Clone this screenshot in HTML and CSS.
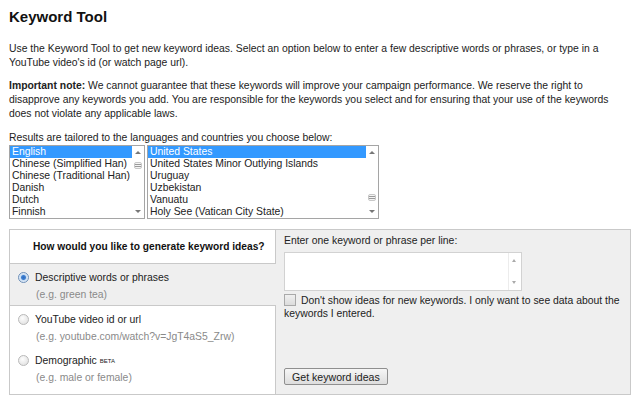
FILE: index.html
```html
<!DOCTYPE html>
<html lang="en">
<head>
    <meta charset="UTF-8">
    <title>Keyword Tool</title>
    <link rel="stylesheet" href="styles.css">
</head>
<body>

<h1 class="page-title">Keyword Tool</h1>

<p class="intro">Use the Keyword Tool to get new keyword ideas. Select an option below to enter a few descriptive words or phrases, or type in a YouTube video's id (or watch page url).</p>

<p class="intro"><b>Important note:</b> We cannot guarantee that these keywords will improve your campaign performance. We reserve the right to disapprove any keywords you add. You are responsible for the keywords you select and for ensuring that your use of the keywords does not violate any applicable laws.</p>

<div class="tailor-label">Results are tailored to the languages and countries you choose below:</div>

<div class="lists">
    <div class="listbox lang-list">
        <div class="list-items">
            <div class="item selected">English</div>
            <div class="item">Chinese (Simplified Han)</div>
            <div class="item">Chinese (Traditional Han)</div>
            <div class="item">Danish</div>
            <div class="item">Dutch</div>
            <div class="item">Finnish</div>
        </div>
        <div class="scroll">
            <span class="arrow up"></span>
            <span class="grip grip-top"></span>
            <span class="arrow down"></span>
        </div>
    </div>
    <div class="listbox country-list">
        <div class="list-items">
            <div class="item selected">United States</div>
            <div class="item">United States Minor Outlying Islands</div>
            <div class="item">Uruguay</div>
            <div class="item">Uzbekistan</div>
            <div class="item">Vanuatu</div>
            <div class="item">Holy See (Vatican City State)</div>
        </div>
        <div class="scroll">
            <span class="arrow up"></span>
            <span class="grip grip-low"></span>
            <span class="arrow down"></span>
        </div>
    </div>
</div>

<div class="panel">
    <div class="choices">
        <div class="choices-head">How would you like to generate keyword ideas?</div>
        <div class="option active">
            <div class="option-label"><span class="radio checked"></span>Descriptive words or phrases</div>
            <div class="option-hint">(e.g. green tea)</div>
        </div>
        <div class="other-options">
            <div class="option">
                <div class="option-label"><span class="radio"></span>YouTube video id or url</div>
                <div class="option-hint">(e.g. youtube.com/watch?v=JgT4aS5_Zrw)</div>
            </div>
            <div class="option">
                <div class="option-label"><span class="radio"></span>Demographic <sup class="beta">BETA</sup></div>
                <div class="option-hint">(e.g. male or female)</div>
            </div>
        </div>
    </div>
    <div class="entry">
        <div class="entry-label">Enter one keyword or phrase per line:</div>
        <div class="textbox">
            <div class="textbox-scroll">
                <span class="arrow up"></span>
                <span class="arrow down"></span>
            </div>
        </div>
        <div class="only-data">
            <span class="checkbox"></span>Don't show ideas for new keywords. I only want to see data about the keywords I entered.
        </div>
        <div class="entry-actions">
            <button class="get-ideas">Get keyword ideas</button>
        </div>
    </div>
</div>

</body>
</html>
```

FILE: styles.css
```css
body {
    margin: 0;
    padding: 0 9px;
    font-family: "Liberation Sans", Arial, sans-serif;
    font-size: 10.4px;
    color: #222;
    background: #fff;
}
.page-title {
    font-size: 15px;
    font-weight: bold;
    margin: 0;
    padding-top: 8px;
    line-height: 17px;
    color: #111;
}
.intro {
    margin: 17px 0 0;
    line-height: 14px;
    padding-right: 14px;
}
.intro + .intro {
    margin-top: 9px;
}
.tailor-label {
    margin-top: 10px;
    line-height: 14px;
}
.lists {
    display: flex;
    gap: 2px;
    margin-top: 0;
}
.listbox {
    display: flex;
    height: 72px;
    border: 1px solid #a5a5a5;
    background: #fff;
}
.lang-list {
    width: 134px;
}
.country-list {
    width: 230px;
}
.list-items {
    flex: 1;
    font-size: 10.4px;
    line-height: 12px;
}
.item {
    padding-left: 2px;
    white-space: nowrap;
    overflow: hidden;
}
.item.selected {
    background: #3399ff;
    color: #fff;
}
.scroll {
    width: 12px;
    position: relative;
    background: #fff;
}
.arrow {
    position: absolute;
    left: 3px;
    width: 0;
    height: 0;
    border-left: 3px solid transparent;
    border-right: 3px solid transparent;
}
.arrow.up {
    top: 5px;
    border-bottom: 3px solid #777;
}
.arrow.down {
    bottom: 5px;
    border-top: 3px solid #777;
}
.grip {
    position: absolute;
    left: 2px;
    width: 6px;
    height: 5px;
    border: 1px solid #c8c8c8;
    border-radius: 2px;
    background: repeating-linear-gradient(#f4f4f4 0, #f4f4f4 1px, #9a9a9a 1px, #9a9a9a 2px);
}
.grip-top {
    top: 16px;
}
.grip-low {
    top: 48px;
}
.panel {
    display: flex;
    margin-top: 10px;
    height: 164px;
    border: 1px solid #c9c9c9;
    background: #efefef;
}
.choices {
    width: 266px;
    display: flex;
    flex-direction: column;
}
.choices-head {
    height: 33px;
    line-height: 33px;
    padding-left: 23px;
    font-size: 10.2px;
    font-weight: bold;
    color: #111;
    background: #fff;
    border-right: 1px solid #c9c9c9;
    border-bottom: 1px solid #c9c9c9;
    white-space: nowrap;
}
.option {
    height: 34px;
    padding: 7px 8px 0;
}
.option-label {
    display: flex;
    align-items: center;
    line-height: 13px;
    color: #222;
}
.option-hint {
    margin: 4px 0 0 18px;
    line-height: 13px;
    color: #8a8a8a;
}
.other-options {
    flex: 1;
    background: #fff;
    border-top: 1px solid #c9c9c9;
    border-right: 1px solid #c9c9c9;
}
.radio {
    width: 9px;
    height: 9px;
    margin-right: 6px;
    border: 1px solid #b9b9b9;
    border-radius: 50%;
    background: radial-gradient(circle at 40% 35%, #fdfdfd, #dcdcdc);
}
.radio.checked {
    border-color: #6d8fb8;
    background: radial-gradient(circle, #2d6cc0 0, #3f7fd0 2px, #c8dcf2 3px, #e9f1fb 5px);
}
.beta {
    font-size: 6px;
    vertical-align: top;
    margin-left: 3px;
    line-height: 6px;
}
.entry {
    flex: 1;
    display: flex;
    flex-direction: column;
    padding: 4px 6px 9px 8px;
}
.entry-label {
    line-height: 14px;
}
.textbox {
    position: relative;
    width: 236px;
    height: 37px;
    margin-top: 4px;
    border: 1px solid #d2d2d2;
    background: #fff;
}
.textbox-scroll {
    position: absolute;
    right: 0;
    top: 0;
    bottom: 0;
    width: 12px;
    border-left: 1px solid #ececec;
}
.textbox-scroll .arrow {
    border-left-width: 2.5px;
    border-right-width: 2.5px;
}
.textbox-scroll .arrow.up {
    top: 6px;
    border-bottom-color: #aaa;
}
.textbox-scroll .arrow.down {
    bottom: 6px;
    border-top-color: #aaa;
}
.only-data {
    margin-top: 3px;
    line-height: 13px;
    font-size: 10.4px;
}
.checkbox {
    display: inline-block;
    width: 10px;
    height: 10px;
    margin: 0 5px 0 0;
    vertical-align: -2px;
    border: 1px solid #a9a9a9;
    background: linear-gradient(#f0f0f0, #dcdcdc);
}
.entry-actions {
    margin-top: auto;
}
.get-ideas {
    font-family: inherit;
    font-size: 10.6px;
    height: 17px;
    padding: 0 7px;
    color: #222;
    border: 1px solid #8f8f8f;
    border-radius: 2px;
    background: linear-gradient(#f6f6f6, #dddddd);
}
```
